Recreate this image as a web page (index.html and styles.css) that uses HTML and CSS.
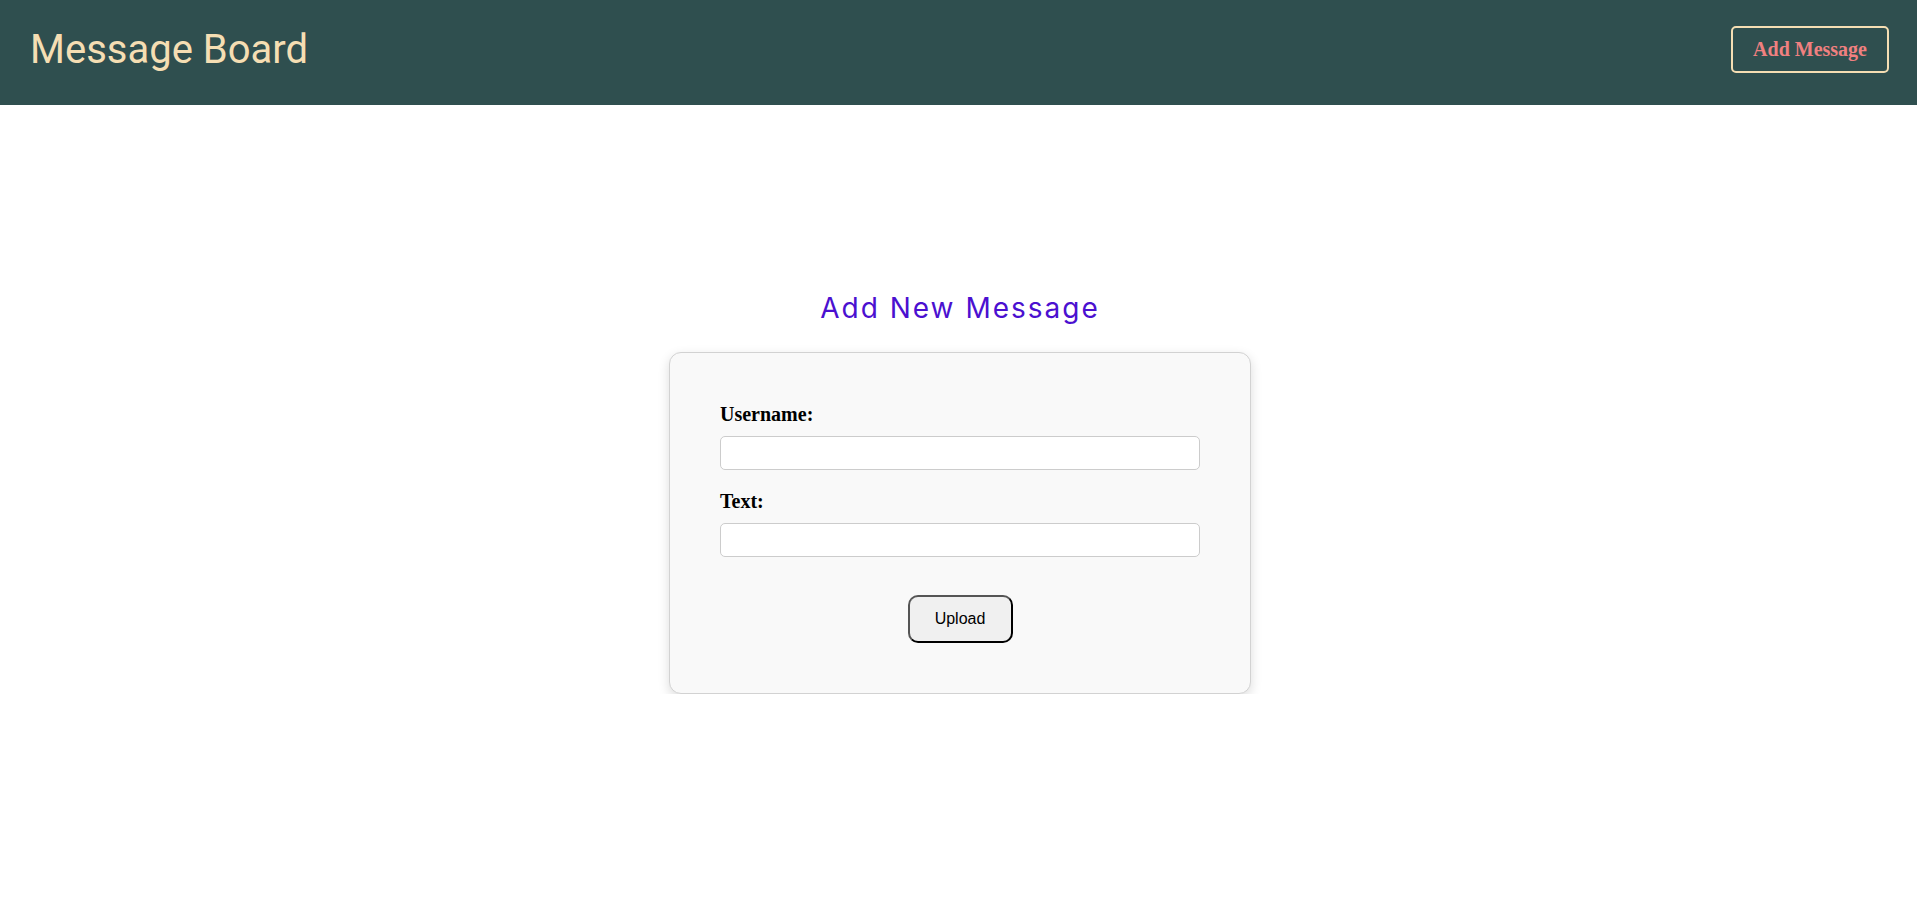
FILE: index.html
```html
<!DOCTYPE html>
<html lang="en">
<head>
<meta charset="utf-8">
<title>Message Board</title>
<link rel="stylesheet" href="styles.css">
</head>
<body>
<header class="topbar">
  <h1 class="brand">Message Board</h1>
  <button class="nav-btn" type="button">Add Message</button>
</header>
<main class="content">
  <h2 class="page-title">Add New Message</h2>
  <form class="card">
    <div class="field">
      <label class="field-label" for="username">Username:</label>
      <input class="field-input" id="username" type="text">
    </div>
    <div class="field">
      <label class="field-label" for="text">Text:</label>
      <input class="field-input" id="text" type="text">
    </div>
    <div class="actions">
      <button class="upload-btn" type="submit">Upload</button>
    </div>
  </form>
</main>
</body>
</html>
```
FILE: styles.css
```css
html, body {
  margin: 0;
  padding: 0;
  background: #ffffff;
}

body {
  font-family: "Liberation Serif", serif;
}

.topbar {
  box-sizing: border-box;
  height: 105px;
  padding: 0 28px 7px 30px;
  background: #2f4f4f;
  display: flex;
  align-items: center;
  justify-content: space-between;
}

.brand {
  margin: 0;
  font-family: Roboto, "Liberation Sans", sans-serif;
  font-weight: 400;
  font-size: 40px;
  line-height: 47px;
  color: #f5deb3;
}

.nav-btn {
  margin: 0;
  padding: 10px 20px;
  background: transparent;
  border: 2px solid #f5deb3;
  border-radius: 5px;
  font-family: "Liberation Serif", serif;
  font-weight: 700;
  font-size: 20px;
  line-height: 23px;
  color: #f08080;
  cursor: pointer;
}

.content {
  padding-top: 186px;
  padding-left: 3px;
  display: flex;
  flex-direction: column;
  align-items: center;
}

.page-title {
  margin: 0 0 27px;
  font-family: Inter, "Open Sans", sans-serif;
  font-weight: 400;
  font-size: 28px;
  line-height: 34px;
  letter-spacing: 2px;
  color: #4b10d0;
}

.card {
  box-sizing: border-box;
  width: 582px;
  padding: 50px;
  background: #f9f9f9;
  border: 1px solid #d2d2d2;
  border-radius: 12px;
  box-shadow: 0 4px 12px rgba(0, 0, 0, 0.14);
}

.field {
  display: flex;
  flex-direction: column;
  margin-bottom: 20px;
}

.field-label {
  font-family: "Liberation Serif", serif;
  font-weight: 700;
  font-size: 20px;
  line-height: 23px;
  color: #000;
  margin-bottom: 10px;
}

.field-input {
  box-sizing: border-box;
  width: 100%;
  height: 34px;
  margin: 0;
  padding: 8px;
  border: 1px solid #cccccc;
  border-radius: 5px;
  background: #ffffff;
  font-family: "Liberation Sans", sans-serif;
  font-size: 14px;
}

.actions {
  display: flex;
  justify-content: center;
  padding-top: 18px;
}

.upload-btn {
  box-sizing: border-box;
  height: 48px;
  width: 105px;
  margin: 0;
  padding: 0;
  background: #f0f0f0;
  border: 2px solid;
  border-color: #555555 #000000 #000000 #555555;
  border-radius: 10px;
  font-family: "Liberation Sans", sans-serif;
  font-size: 16px;
  color: #000;
  cursor: pointer;
}
```
